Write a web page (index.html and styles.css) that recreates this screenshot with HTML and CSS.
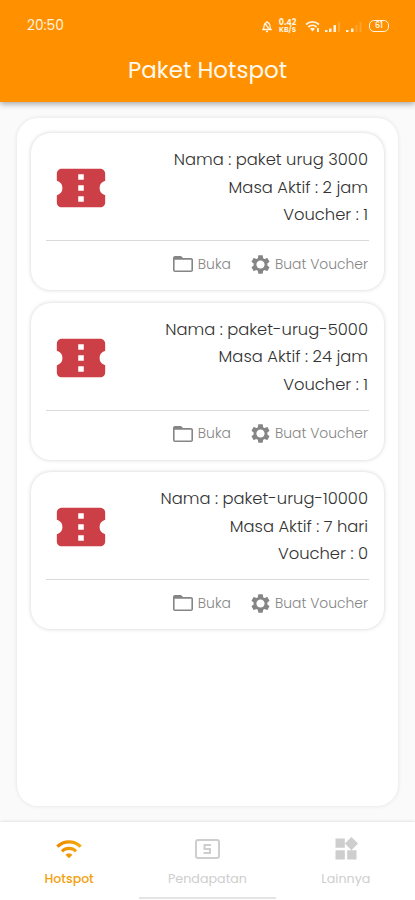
FILE: index.html
```
<!DOCTYPE html>
<html lang="id">
<head>
  <meta charset="UTF-8">
  <meta name="viewport" content="width=device-width, initial-scale=1.0">
  <title>Paket Hotspot</title>
  <link rel="stylesheet" href="styles.css">
</head>
<body>
  <!-- Ikon yang dipakai berulang -->
  <svg class="sprite" width="0" height="0">
    <symbol id="ticket" viewBox="0 0 24 24">
      <path d="M22 9V6c0-1.110-.9-2-2-2H4c-1.100 0-2 .89-2 2v3c1.600.5 2.300 1.600 2.300 3S3.600 14.500 2 15v3c0 1.100.9 2 2 2h16c1.100 0 2-.9 2-2v-3c-1.600-.5-2.300-1.600-2.300-3s.7-2.500 2.300-3zm-8.850 8.700h-2.300v-2.300h2.300v2.300zm0-4.550h-2.300v-2.300h2.300v2.300zm0-4.550h-2.300V6.300h2.300v2.300z"/>
    </symbol>
    <symbol id="folder" viewBox="0 0 24 24">
      <path d="M20 6h-8l-2-2H4c-1.100 0-2 .9-2 2v12c0 1.100.9 2 2 2h16c1.100 0 2-.9 2-2V8c0-1.100-.9-2-2-2zm.4 12.400H3.600V7.700h16.800v10.700z"/>
    </symbol>
    <symbol id="gear" viewBox="0 0 24 24">
      <path d="M19.140 12.940c.04-.3.060-.61.060-.94 0-.32-.02-.64-.07-.94l2.030-1.580c.18-.14.230-.41.120-.61l-1.920-3.320c-.12-.22-.37-.29-.59-.22l-2.390.96c-.5-.38-1.030-.7-1.620-.94l-.36-2.540c-.04-.24-.24-.41-.48-.41h-3.840c-.24 0-.43.17-.47.41l-.36 2.540c-.59.24-1.130.57-1.620.94l-2.390-.96c-.22-.08-.47 0-.59.22L2.740 8.870c-.12.21-.08.470.120.610l2.030 1.580c-.05.3-.09.630-.09.940s.02.640.070.940l-2.030 1.580c-.18.14-.23.41-.12.610l1.920 3.320c.12.220.370.290.590.220l2.390-.96c.5.380 1.030.7 1.620.940l.36 2.540c.05.240.240.410.480.410h3.840c.24 0 .44-.17.470-.41l.36-2.540c.59-.24 1.130-.56 1.620-.94l2.390.960c.22.080.470 0 .59-.22l1.920-3.320c.12-.22.070-.47-.12-.61l-2.010-1.580zM12 16.300c-2.370 0-4.300-1.930-4.300-4.300s1.930-4.300 4.300-4.300 4.300 1.930 4.300 4.300-1.930 4.300-4.300 4.300z"/>
    </symbol>
  </svg>

  <div class="app">
    <header class="header">
      <div class="status">
        <span class="clock">20:50</span>
        <svg class="bell" viewBox="0 0 10 13">
          <path d="M1 9.500c1-1 1-2.300 1.200-4C2.500 3.500 3.500 2.500 5 2.300c1.600.2 2.600 1.200 2.900 3.200.1 1.700.2 3 1.100 4z M4 11.500h2 M5 1v1.300 M3 3.500l4.500 6"/>
        </svg>
        <span class="speed"><b>0.42</b><b>KB/S</b></span>
        <svg class="wifi-small" viewBox="0 0 16 13">
          <path d="M1 4.500c3.700-3.400 9.300-3.400 13 0M3.300 7c2.400-2.200 6-2.200 8.400 0"/>
          <path class="solid" d="M5 8.700c1.500-1.200 3.500-1.200 5 0L7.500 11.500zM12 8h2v4h-2z"/>
        </svg>
        <svg class="signal" viewBox="0 0 16 13">
          <path d="M0 10h2.500v2H0zM4 8.500h2.500V12H4zM8.500 5H11v7H8.500z"/>
          <path class="off" d="M13 2h2v10h-2z"/>
        </svg>
        <svg class="signal second" viewBox="0 0 16 13">
          <path d="M0 10h2.500v2H0zM5 8.500h2.500V12H5z"/>
          <path class="off" d="M9.500 5h2v7h-2zM13.500 2h2v10h-2z"/>
        </svg>
        <span class="battery">61</span>
      </div>
      <h1>Paket Hotspot</h1>
    </header>

    <main class="content">
      <div class="panel">
        <div class="card">
          <div class="info">
            <svg class="ticket"><use href="#ticket"/></svg>
            <div class="detail">
              <p>Nama : paket urug 3000</p>
              <p>Masa Aktif : 2 jam</p>
              <p>Voucher : 1</p>
            </div>
          </div>
          <div class="actions">
            <button><svg class="folder"><use href="#folder"/></svg>Buka</button>
            <button><svg class="gear"><use href="#gear"/></svg>Buat Voucher</button>
          </div>
        </div>

        <div class="card">
          <div class="info">
            <svg class="ticket"><use href="#ticket"/></svg>
            <div class="detail">
              <p>Nama : paket-urug-5000</p>
              <p>Masa Aktif : 24 jam</p>
              <p>Voucher : 1</p>
            </div>
          </div>
          <div class="actions">
            <button><svg class="folder"><use href="#folder"/></svg>Buka</button>
            <button><svg class="gear"><use href="#gear"/></svg>Buat Voucher</button>
          </div>
        </div>

        <div class="card">
          <div class="info">
            <svg class="ticket"><use href="#ticket"/></svg>
            <div class="detail">
              <p>Nama : paket-urug-10000</p>
              <p>Masa Aktif : 7 hari</p>
              <p>Voucher : 0</p>
            </div>
          </div>
          <div class="actions">
            <button><svg class="folder"><use href="#folder"/></svg>Buka</button>
            <button><svg class="gear"><use href="#gear"/></svg>Buat Voucher</button>
          </div>
        </div>
      </div>
    </main>

    <nav class="nav">
      <a class="tab active">
        <svg viewBox="0 0 24 24">
          <defs>
            <linearGradient id="amber">
              <stop offset="0" stop-color="#ee8500"/>
              <stop offset="1" stop-color="#f5ad0c"/>
            </linearGradient>
          </defs>
          <path fill="url(#amber)" d="M1 9l2 2c4.970-4.970 13.030-4.970 18 0l2-2C16.930 2.930 7.080 2.930 1 9zm8 8l3 3 3-3c-1.650-1.660-4.340-1.660-6 0zm-4-4l2 2c2.760-2.760 7.240-2.760 10 0l2-2C15.140 9.140 8.870 9.140 5 13z"/>
        </svg>
        <span>Hotspot</span>
      </a>
      <a class="tab">
        <svg viewBox="0 0 28 28">
          <rect x="3" y="5" width="23" height="18" rx="2" fill="none" stroke="currentColor" stroke-width="2"/>
          <path d="M18 10h-6.500v4h5.500v4h-6.500" fill="none" stroke="currentColor" stroke-width="2"/>
        </svg>
        <span>Pendapatan</span>
      </a>
      <a class="tab">
        <svg viewBox="0 0 24 24">
          <path d="M13 13v8h8v-8h-8zM3 21h8v-8H3v8zM3 3v8h8V3H3zm13.660-1.310L11 7.340 16.660 13l5.660-5.660-5.660-5.650z"/>
        </svg>
        <span>Lainnya</span>
      </a>
      <div class="home-bar"></div>
    </nav>
  </div>
</body>
</html>
```
FILE: styles.css
```
* {
  box-sizing: border-box;
}

body {
  margin: 0;
  background: #fafafa;
  font-family: 'Poppins', 'Inter', sans-serif;
  color: #333;
}

.sprite {
  position: absolute;
}

svg {
  fill: currentColor;
  flex: none;
}

.app {
  display: flex;
  flex-direction: column;
  height: 900px;
  overflow: hidden;
}

/* Header */
.header {
  height: 102px;
  background: #ff9100;
  color: #fff2df;
  box-shadow: 0 2px 6px rgba(0, 0, 0, 0.35);
}

.status {
  display: flex;
  align-items: center;
  height: 52px;
  padding: 0 26px 0 27px;
}

.clock {
  margin-right: auto;
  font-size: 13.8px;
}

.bell {
  width: 10px;
  height: 13px;
  margin-right: 6px;
  fill: none;
  stroke: currentColor;
  stroke-width: 1.3;
}

.speed {
  width: 19px;
  margin-right: 8px;
  text-align: center;
}

.speed b {
  display: block;
  font-size: 7px;
  line-height: 7px;
}

.speed b:first-child {
  font-size: 8px;
}

.wifi-small {
  width: 16px;
  height: 13px;
  margin-right: 4px;
  fill: none;
  stroke: currentColor;
  stroke-width: 1.7;
}

.wifi-small .solid {
  fill: currentColor;
  stroke: none;
}

.signal {
  width: 16px;
  height: 13px;
  margin-right: 5px;
}

.signal.second {
  margin-right: 7px;
}

.signal .off {
  opacity: 0.2;
}

.battery {
  width: 20px;
  height: 12px;
  border: 1.5px solid;
  border-radius: 5px;
  font-size: 8px;
  font-weight: 600;
  line-height: 10px;
  text-align: center;
}

h1 {
  margin: 0;
  font-size: 23px;
  font-weight: 400;
  line-height: 36px;
  text-align: center;
  color: #fff8ec;
}

/* Daftar paket */
.content {
  flex: 1;
  padding: 16px 17px;
}

.panel {
  display: flex;
  flex-direction: column;
  gap: 12.5px;
  height: 688px;
  padding: 15px 14px;
  background: #fff;
  border-radius: 21px;
  box-shadow: 0 0 4px rgba(0, 0, 0, 0.1);
}

.card {
  height: 157px;
  padding: 0 15px;
  background: #fff;
  border-radius: 20px;
  box-shadow: 0 0 4px rgba(0, 0, 0, 0.18);
}

.info {
  display: flex;
  justify-content: space-between;
  height: 108px;
  padding-top: 13px;
  border-bottom: 1px solid #d9d9d9;
}

.ticket {
  width: 58px;
  height: 58px;
  margin: 13px 0 0 6px;
  color: #cd3f46;
}

.detail {
  text-align: right;
}

.detail p {
  margin: 0;
  padding-right: 1px;
  font-size: 16.35px;
  font-weight: 300;
  line-height: 27.7px;
}

.actions {
  display: flex;
  justify-content: flex-end;
  align-items: center;
  gap: 18px;
  height: 46px;
  padding-right: 1px;
}

.actions button {
  display: flex;
  align-items: center;
  padding: 0;
  border: none;
  background: none;
  font-family: inherit;
  font-size: 13.9px;
  font-weight: 300;
  color: #858585;
}

.folder {
  width: 24px;
  height: 24px;
  margin-right: 3px;
}

.gear {
  width: 23px;
  height: 23px;
  margin-right: 3px;
}

/* Navigasi bawah */
.nav {
  position: relative;
  display: flex;
  height: 78px;
  background: #fff;
  box-shadow: 0 0 3px rgba(0, 0, 0, 0.16);
}

.tab {
  display: flex;
  flex: 1;
  flex-direction: column;
  align-items: center;
  padding-top: 13px;
  font-size: 12.7px;
  line-height: 18px;
  color: #cecece;
}

.tab svg {
  width: 28px;
  height: 28px;
  margin-bottom: 7px;
}

.tab.active {
  color: #f3a00c;
  font-size: 12.5px;
  font-weight: 500;
}

.home-bar {
  position: absolute;
  bottom: 1px;
  left: 139px;
  width: 137px;
  height: 2px;
  background: #e4e4e4;
}
```
